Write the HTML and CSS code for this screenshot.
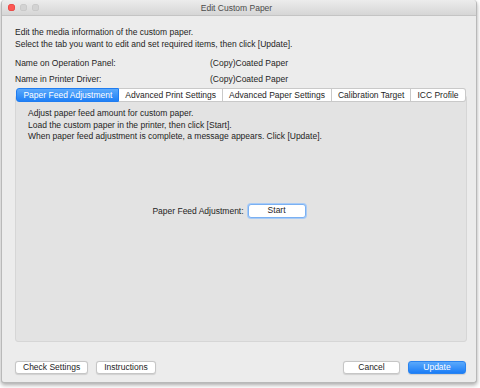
FILE: index.html
```html
<!DOCTYPE html>
<html lang="en">
<head>
<meta charset="utf-8">
<title>Edit Custom Paper</title>
<link rel="stylesheet" href="styles.css">
</head>
<body>
<div class="window">
  <div class="titlebar">
    <div class="lights">
      <span class="light red"></span>
      <span class="light"></span>
      <span class="light"></span>
    </div>
    <div class="title">Edit Custom Paper</div>
  </div>
  <div class="body">
    <div class="intro">
      <p>Edit the media information of the custom paper.</p>
      <p>Select the tab you want to edit and set required items, then click [Update].</p>
    </div>
    <div class="names">
      <div class="name-row"><span class="name-label">Name on Operation Panel:</span><span class="name-value">(Copy)Coated Paper</span></div>
      <div class="name-row"><span class="name-label">Name in Printer Driver:</span><span class="name-value">(Copy)Coated Paper</span></div>
    </div>
    <div class="tabview">
      <div class="tabs">
        <div class="tab active">Paper Feed Adjustment</div>
        <div class="tab">Advanced Print Settings</div>
        <div class="tab">Advanced Paper Settings</div>
        <div class="tab">Calibration Target</div>
        <div class="tab">ICC Profile</div>
      </div>
      <div class="panel">
        <div class="panel-text">
          <p>Adjust paper feed amount for custom paper.</p>
          <p>Load the custom paper in the printer, then click [Start].</p>
          <p>When paper feed adjustment is complete, a message appears. Click [Update].</p>
        </div>
        <div class="start-row">
          <span class="start-label">Paper Feed Adjustment:</span>
          <button class="btn start">Start</button>
        </div>
      </div>
    </div>
    <div class="footer">
      <div class="group">
        <button class="btn">Check Settings</button>
        <button class="btn">Instructions</button>
      </div>
      <div class="group">
        <button class="btn cancel">Cancel</button>
        <button class="btn primary">Update</button>
      </div>
    </div>
  </div>
</div>
</body>
</html>
```
FILE: styles.css
```css
html, body {
  margin: 0;
  padding: 0;
}
body {
  background: #ffffff;
  width: 480px;
  height: 388px;
  overflow: hidden;
  font-family: "Liberation Sans", Arial, sans-serif;
  font-size: 8.5px;
  color: #1e1e1e;
}
p { margin: 0; }

.window {
  margin-left: 1px;
  width: 474px;
  height: 382px;
  border: 1px solid #b9b9b9;
  border-top: none;
  border-radius: 4px 4px 3px 3px;
  background: #ececec;
  box-shadow: 0 2px 4px rgba(0,0,0,0.35);
  display: flex;
  flex-direction: column;
  overflow: hidden;
}

.titlebar {
  height: 16px;
  flex: none;
  background: linear-gradient(#ececec, #d6d6d6);
  border-bottom: 1px solid #c4c4c4;
  box-sizing: border-box;
  display: flex;
  align-items: center;
}
.lights {
  display: flex;
  gap: 5px;
  padding-left: 6px;
}
.light {
  width: 7px;
  height: 7px;
  border-radius: 50%;
  background: #d3d3d3;
  box-shadow: inset 0 0 0 0.5px #c2c2c2;
}
.light.red {
  background: #fc5753;
  box-shadow: inset 0 0 0 0.5px #df3d3a;
}
.title {
  flex: 1;
  text-align: center;
  margin-right: 42px;
  color: #4b4b4b;
  font-size: 8.5px;
}

.body {
  flex: 1;
  display: flex;
  flex-direction: column;
  padding: 11px 10px 0 13px;
}

.intro {
  line-height: 11.5px;
}

.names {
  margin-top: 5px;
}
.name-row {
  display: flex;
  height: 16px;
  align-items: center;
}
.name-label {
  width: 195px;
}

.tabview {
  display: flex;
  flex-direction: column;
}
.tabs {
  display: flex;
  justify-content: center;
  position: relative;
  z-index: 1;
  margin: 1px 0 -7px;
  width: 452px;
}
.tab {
  flex: none;
  white-space: nowrap;
  height: 14px;
  box-sizing: border-box;
  padding: 0 6px;
  display: flex;
  align-items: center;
  background: #ffffff;
  border: 1px solid #c9c9c9;
  border-left: none;
  color: #1e1e1e;
}
.tab:first-child {
  border-left: 1px solid #c9c9c9;
  border-radius: 3px 0 0 3px;
}
.tab:last-child {
  border-radius: 0 3px 3px 0;
}
.tab.active {
  background: linear-gradient(#5ba9fb, #1f80f6);
  border-color: #1f7cf0;
  color: #ffffff;
}

.panel {
  height: 247px;
  box-sizing: border-box;
  background: #e3e3e3;
  border: 1px solid #d6d6d6;
  border-radius: 3px;
  padding: 12px 12px 0;
  width: 452px;
}
.panel-text {
  line-height: 11.5px;
}

.start-row {
  display: flex;
  justify-content: center;
  align-items: center;
  gap: 4px;
  margin-top: 61px;
  padding-right: 24px;
}

.btn {
  font-family: inherit;
  font-size: 8.5px;
  color: #1e1e1e;
  height: 13px;
  padding: 0 7px;
  background: #ffffff;
  border: 1px solid #c6c6c6;
  border-radius: 3px;
  box-shadow: 0 0.5px 1px rgba(0,0,0,0.12);
  line-height: 11px;
  white-space: nowrap;
}
.btn.start {
  width: 58px;
  height: 14px;
  border-color: #7ab0f2;
  box-shadow: 0 0 0 1px #a8cbf6;
}
.btn.cancel {
  width: 57px;
}
.btn.primary {
  width: 58px;
  background: linear-gradient(#5ba9fb, #1b7df6);
  border-color: #2a83ef;
  color: #ffffff;
}

.footer {
  display: flex;
  justify-content: space-between;
  margin-top: 19px;
  padding-right: 0;
}
.group {
  display: flex;
  gap: 8px;
}
```
